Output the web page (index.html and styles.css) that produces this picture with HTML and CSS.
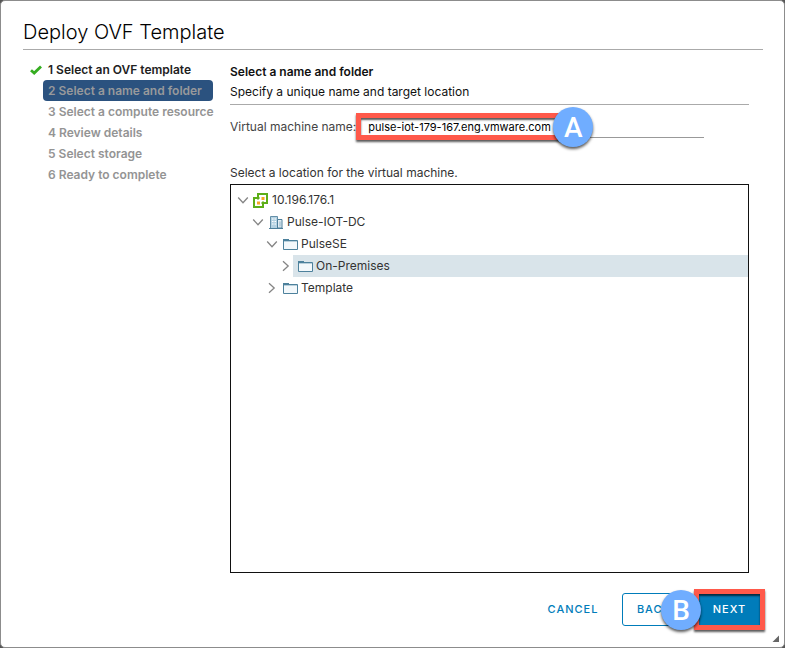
FILE: index.html
```html
<!DOCTYPE html>
<html lang="en">
<head>
<meta charset="utf-8">
<title>Deploy OVF Template</title>
<link rel="stylesheet" href="styles.css">
</head>
<body>
<svg class="defs" aria-hidden="true">
  <symbol id="down" viewBox="0 0 12 12"><path d="M1.2 3.5 6 8.7l4.800-5.200" fill="none" stroke="#858585" stroke-width="1.300"/></symbol>
  <symbol id="right" viewBox="0 0 12 12"><path d="M3 1.200 8.200 6 3 10.800" fill="none" stroke="#858585" stroke-width="1.300"/></symbol>
  <symbol id="folder" viewBox="0 0 16 16"><path d="M1.500 3.500H6.500V4.500H15.500V13.500H1.500Z" fill="#f3f8fb" stroke="#4d819c"/><path d="M1 3.500H7M1 4.500H15" stroke="#4d819c"/><path d="M2 5.500H15" stroke="#b9d0dc"/></symbol>
</svg>
<main class="dialog">
  <h1 class="title">Deploy OVF Template</h1>
  <div class="content">
    <ol class="steps">
      <li class="step done"><svg class="check" viewBox="0 0 12 10"><path d="M1 5.200 4.200 8 11 1.500" fill="none" stroke="#35ad20" stroke-width="2.800"/></svg><span>1 Select an OVF template</span></li>
      <li class="step current" aria-current="step"><span>2 Select a name and folder</span></li>
      <li class="step"><span>3 Select a compute resource</span></li>
      <li class="step"><span>4 Review details</span></li>
      <li class="step"><span>5 Select storage</span></li>
      <li class="step"><span>6 Ready to complete</span></li>
    </ol>
    <section class="panel">
      <header class="intro">
        <h2>Select a name and folder</h2>
        <p>Specify a unique name and target location</p>
      </header>
      <div class="name-row">
        <label for="vm-name">Virtual machine name:</label>
        <div class="field">
          <input id="vm-name" type="text" value="pulse-iot-179-167.eng.vmware.com">
          <span class="outline name-outline"></span>
          <span class="badge badge-a">A</span>
        </div>
      </div>
      <p class="location">Select a location for the virtual machine.</p>
      <div class="tree" role="tree">
        <div class="node" role="treeitem"><svg class="caret"><use href="#down"/></svg><div class="item">
          <svg class="icon" viewBox="0 0 16 16"><path d="M5 2H14V11H10V15H1V6H5Z" fill="#fff" stroke="#5dae18" stroke-width="2"/><path d="M5 6V7.500M5 6H6.500M10 11V9.500M10 11H8.500" stroke="#5dae18" stroke-width="2"/><path d="M8.500 5h3v3h-3zM4 9.500h3v3H4z" fill="#f6a623"/></svg><span>10.196.176.1</span></div></div>
        <div class="node level-1" role="treeitem"><svg class="caret"><use href="#down"/></svg><div class="item">
          <svg class="icon" viewBox="0 0 16 16"><path d="M2.500 14V2.500H9.500V14" fill="#b5d2e2" stroke="#648fa8"/><path d="M9.500 5.500H14V14H9.500Z" fill="#e2edf4" stroke="#4d7f9b"/><path d="M4 5h1.500M6.500 5H8M4 7.500h1.500M6.500 7.500H8M4 10h1.500M6.500 10H8" stroke="#fff"/><path d="M12 7.500v5" stroke="#8fb3c7"/><path d="M1 14.500h14" stroke="#4d7f9b"/></svg><span>Pulse-IOT-DC</span></div></div>
        <div class="node level-2" role="treeitem"><svg class="caret"><use href="#down"/></svg><div class="item"><svg class="icon"><use href="#folder"/></svg><span>PulseSE</span></div></div>
        <div class="node level-3" role="treeitem" aria-selected="true"><svg class="caret"><use href="#right"/></svg><div class="item selected"><svg class="icon"><use href="#folder"/></svg><span>On-Premises</span></div></div>
        <div class="node level-2" role="treeitem"><svg class="caret"><use href="#right"/></svg><div class="item"><svg class="icon"><use href="#folder"/></svg><span>Template</span></div></div>
      </div>
    </section>
  </div>
  <footer class="actions">
    <button class="button cancel" type="button">CANCEL</button>
    <button class="button back" type="button">BACK</button>
    <div class="next-wrap">
      <button class="button next" type="button">NEXT</button>
      <span class="outline next-outline"></span>
      <span class="badge badge-b">B</span>
    </div>
  </footer>
  <svg class="grip" viewBox="0 0 8 8" aria-hidden="true"><path d="M7 0.500V7H0.500Z" fill="#666"/></svg>
</main>
</body>
</html>
```
FILE: styles.css
```css
* { box-sizing: border-box; }
body {
  margin: 0;
  background: #555;
  color: #222;
  font: 12px/20px Inter, "Open Sans", sans-serif;
}
h1, h2, p, ol { margin: 0; padding: 0; }
.defs { position: absolute; width: 0; height: 0; }
.dialog {
  position: relative;
  display: flex;
  flex-direction: column;
  min-height: 100vh;
  padding: 15px 21px 21px 22px;
  border: 1px solid #8c8c8c;
  border-radius: 5px;
  background: #fff;
}
.title {
  height: 34px;
  border-bottom: 1px solid #aaa;
  color: #000;
  font-size: 20px;
  font-weight: 300;
  line-height: 33px;
}
.content {
  display: grid;
  grid-template-columns: 190px minmax(0, 1fr);
  flex: 1;
  gap: 17px;
  padding-right: 14px;
}
.steps { padding: 9px 0 0 20px; list-style: none; }
.step {
  position: relative;
  height: 21px;
  padding-left: 5px;
  color: #949494;
  font-size: 12px;
  font-weight: 600;
  line-height: 21px;
  white-space: nowrap;
}
.done { color: #222; }
.current { border-radius: 4px; background: #2b527f; color: #98999b; }
.check { position: absolute; left: -13px; top: 6px; width: 12px; height: 10px; }
.panel { display: flex; flex-direction: column; }
.intro {
  height: 55px;
  padding-top: 12px;
  border-bottom: 1px solid #aaa;
  color: #111;
  line-height: 19px;
}
.intro h2 { font-size: 12px; font-weight: 600; line-height: 20px; }
.name-row { display: flex; gap: 3px; height: 33px; margin-right: 45px; padding-top: 12px; color: #444; }
.name-row label { flex: none; }
.field { position: relative; flex: 1; }
.field input {
  display: block;
  width: 100%;
  height: 21px;
  padding: 0 9px;
  border: 0;
  border-bottom: 1px solid #999;
  outline: 0;
  background: transparent;
  color: #000;
  font: 11px/20px Inter, sans-serif;
}
.outline {
  position: absolute;
  border: 5px solid #ff594a;
  box-shadow: 0 2px 2px rgba(0,0,0,.65), inset 0 2px 2px rgba(0,0,0,.65);
  pointer-events: none;
}
.name-outline { top: -4px; left: -3px; width: 212px; height: 27px; }
.badge {
  position: absolute;
  width: 40px;
  height: 40px;
  border-radius: 50%;
  background: #70adff;
  box-shadow: 0 2px 3px rgba(0,0,0,.65);
  color: #fff;
  font: 500 28px/41px Roboto, sans-serif;
  text-align: center;
}
.badge-a { top: -10px; left: 194px; }
.location { margin-top: 25px; color: #333; }
.tree {
  flex: 1;
  margin-top: 1px;
  padding: 4px 0;
  border: 1px solid #111;
}
.node { display: flex; align-items: center; height: 22px; padding-left: 6px; }
.level-1 { padding-left: 21px; }
.level-2 { padding-left: 35px; }
.level-3 { padding-left: 49px; }
.caret { flex: none; width: 12px; height: 12px; }
.item { display: flex; align-items: center; flex: 1; height: 22px; gap: 3px; padding-left: 4px; color: #333; }
.item.selected { margin-left: 1px; background: #d9e4ea; }
.icon { width: 16px; height: 16px; }
.actions { display: flex; justify-content: flex-end; gap: 10px; margin-top: 20px; }
.button {
  height: 33px;
  padding: 0;
  border: 1px solid #007cba;
  border-radius: 3px;
  background: #fff;
  color: #007cba;
  font: 500 11px/31px Inter, sans-serif;
  letter-spacing: 1px;
}
.cancel { width: 78px; border-color: transparent; }
.back { width: 64px; }
.next-wrap { position: relative; }
.next { width: 67px; background: #007cba; color: #fff; }
.next-outline { top: -4px; left: -2px; width: 71px; height: 41px; }
.badge-b { top: -3px; left: -35px; }
.grip { position: absolute; right: 4px; bottom: 4px; width: 8px; height: 8px; }
```
